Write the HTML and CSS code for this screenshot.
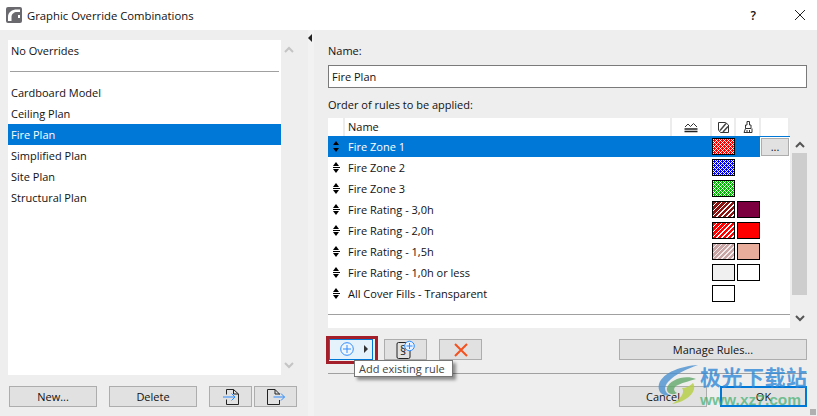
FILE: index.html
```html
<!DOCTYPE html>
<html lang="en">
<head>
<meta charset="utf-8">
<title>Graphic Override Combinations</title>
<link rel="stylesheet" href="styles.css">
</head>
<body>
<div class="dialog">
  <header class="titlebar">
    <svg class="app-logo" width="16" height="16" viewBox="0 0 16 16"><rect width="16" height="16" rx="2" fill="#6a6a6e"/><path d="M2 14V10C2 5 6 2.500 11 2.500H14V5H11C8 5 5.500 7 5.500 10V14Z" fill="#fff"/><rect x="12" y="8" width="2" height="3" fill="#fff"/></svg>
    <span class="title">Graphic Override Combinations</span>
    <span class="help">?</span>
    <svg class="close" width="12" height="12" viewBox="0 0 12 12"><path d="M1 1L11 11M11 1L1 11" stroke="#222" stroke-width="1" fill="none"/></svg>
  </header>
  <div class="content">
    <aside class="left">
      <div class="left-top">
        <div class="list">
          <div class="item">No Overrides</div>
          <div class="list-sep"></div>
          <div class="item">Cardboard Model</div>
          <div class="item">Ceiling Plan</div>
          <div class="item selected">Fire Plan</div>
          <div class="item">Simplified Plan</div>
          <div class="item">Site Plan</div>
          <div class="item">Structural Plan</div>
        </div>
        <div class="list-scroll">
          <svg width="10" height="7" viewBox="0 0 10 7"><path d="M1 6L5 2L9 6" stroke="#c4c4c4" stroke-width="2" fill="none"/></svg>
          <svg width="10" height="7" viewBox="0 0 10 7"><path d="M1 1L5 5L9 1" stroke="#c4c4c4" stroke-width="2" fill="none"/></svg>
        </div>
      </div>
      <div class="left-buttons">
        <button class="btn wide">New...</button>
        <button class="btn wide">Delete</button>
        <button class="btn icon-btn">
          <svg width="18" height="16" viewBox="0 0 18 16"><path d="M4.500 5.500V.5H11.500L16.500 5V15.500H4.500V10.500" stroke="#222" fill="none"/><path d="M11.500 .5V5H16.500" stroke="#222" fill="none"/><path d="M1 8H13M9.500 4.500L13 8L9.500 11.500" stroke="#2f8cff" fill="none"/></svg>
        </button>
        <button class="btn icon-btn">
          <svg width="18" height="16" viewBox="0 0 18 16"><path d="M12.500 5.500V5L8 .5H.5V15.500H12.500V11" stroke="#222" fill="none"/><path d="M8 .5V5H12.500" stroke="#222" fill="none"/><path d="M6.500 8H17.500M14 4.500L17.500 8L14 11.500" stroke="#2f8cff" fill="none"/></svg>
        </button>
      </div>
    </aside>
    <div class="splitter"><span class="split-arrow"></span></div>
    <main class="right">
      <label class="label name-label">Name:</label>
      <div class="name-input">Fire Plan</div>
      <label class="label order-label">Order of rules to be applied:</label>
      <div class="table-wrap">
        <div class="table">
          <div class="row head">
            <span class="c-grip"></span>
            <span class="c-name">Name</span>
            <span class="c-a"><svg width="14" height="11" viewBox="0 0 14 11"><path d="M1 5L4 2L6.500 4.500L9.500 1.500L13 5" stroke="#333" fill="none"/><path d="M.5 7H13.500M.5 9.500H13.500" stroke="#222" stroke-width="1.400"/></svg></span>
            <span class="c-b head-icon"><svg width="12" height="11" viewBox="0 0 12 11"><path d="M1.500 .5H8.500L11.500 3V10.500H3.500L1.500 8Z" stroke="#333" fill="none"/><path d="M3 8.500L9 1.500M6 10L11 4.500" stroke="#444" stroke-width="1.500"/></svg></span>
            <span class="c-c head-icon"><svg width="10" height="12" viewBox="0 0 10 12"><path d="M4 .5H6.500V4H8V7.500H2.500V4H4Z" stroke="#333" fill="#fff"/><path d="M2.500 7.500L1 11.500H9V7.500" stroke="#333" fill="none"/><path d="M4 9V11M6.500 9V11" stroke="#333"/></svg></span>
            <span class="c-d"></span>
          </div>
          <div class="row sel">
            <span class="c-grip"><i class="grip"></i></span><span class="c-name">Fire Zone 1</span><span class="c-a"></span>
            <span class="c-b"><i class="sw dots red"></i></span><span class="c-c"></span>
            <span class="c-d"><span class="more">...</span></span>
          </div>
          <div class="row">
            <span class="c-grip"><i class="grip"></i></span><span class="c-name">Fire Zone 2</span><span class="c-a"></span>
            <span class="c-b"><i class="sw dots blue"></i></span><span class="c-c"></span><span class="c-d"></span>
          </div>
          <div class="row">
            <span class="c-grip"><i class="grip"></i></span><span class="c-name">Fire Zone 3</span><span class="c-a"></span>
            <span class="c-b"><i class="sw dots green"></i></span><span class="c-c"></span><span class="c-d"></span>
          </div>
          <div class="row">
            <span class="c-grip"><i class="grip"></i></span><span class="c-name">Fire Rating - 3,0h</span><span class="c-a"></span>
            <span class="c-b"><i class="sw h-dark"></i></span><span class="c-c"><i class="sw s-maroon"></i></span><span class="c-d"></span>
          </div>
          <div class="row">
            <span class="c-grip"><i class="grip"></i></span><span class="c-name">Fire Rating - 2,0h</span><span class="c-a"></span>
            <span class="c-b"><i class="sw h-red"></i></span><span class="c-c"><i class="sw s-red"></i></span><span class="c-d"></span>
          </div>
          <div class="row">
            <span class="c-grip"><i class="grip"></i></span><span class="c-name">Fire Rating - 1,5h</span><span class="c-a"></span>
            <span class="c-b"><i class="sw h-pale"></i></span><span class="c-c"><i class="sw s-salmon"></i></span><span class="c-d"></span>
          </div>
          <div class="row">
            <span class="c-grip"><i class="grip"></i></span><span class="c-name">Fire Rating - 1,0h or less</span><span class="c-a"></span>
            <span class="c-b"><i class="sw s-grey"></i></span><span class="c-c"><i class="sw"></i></span><span class="c-d"></span>
          </div>
          <div class="row">
            <span class="c-grip"><i class="grip"></i></span><span class="c-name">All Cover Fills - Transparent</span><span class="c-a"></span>
            <span class="c-b"><i class="sw"></i></span><span class="c-c"></span><span class="c-d"></span>
          </div>
          <div class="table-end"></div>
        </div>
        <div class="table-scroll">
          <div class="arrow up"><svg width="10" height="7" viewBox="0 0 10 7"><path d="M1 6L5 2L9 6" stroke="#555" stroke-width="2" fill="none"/></svg></div>
          <div class="thumb"></div>
          <div class="arrow down"><svg width="10" height="7" viewBox="0 0 10 7"><path d="M1 1L5 5L9 1" stroke="#555" stroke-width="2" fill="none"/></svg></div>
        </div>
      </div>
      <div class="tools">
        <div class="add-outline">
          <button class="add-btn">
            <svg width="14" height="14" viewBox="0 0 14 14"><circle cx="7" cy="7" r="6.300" stroke="#2f8cff" fill="#fff" fill-opacity=".4"/><path d="M7 3V11M3 7H11" stroke="#2f8cff"/></svg>
            <span class="tri"></span>
          </button>
        </div>
        <button class="btn tool t-rule">
          <svg width="26" height="20" viewBox="0 0 26 20"><rect x="4" y="2.500" width="13" height="16" rx="1.500" stroke="#222" fill="none"/><text x="7" y="15" class="para">§</text><circle cx="16.500" cy="6" r="4.800" stroke="#2f8cff" fill="#e8f2ff"/><path d="M16.500 3V9M13.500 6H19.500" stroke="#2f8cff"/></svg>
        </button>
        <button class="btn tool t-del">
          <svg width="14" height="14" viewBox="0 0 14 14"><path d="M1 1L13 13M13 1L1 13" stroke="#f4511e" stroke-width="2" fill="none"/></svg>
        </button>
        <button class="btn manage">Manage Rules...</button>
      </div>
      <div class="rule"></div>
      <div class="footer">
        <button class="btn wide">Cancel</button>
        <button class="btn wide ok">OK</button>
      </div>
      <div class="tooltip">Add existing rule</div>
    </main>
  </div>
  <div class="watermark">
    <svg class="wm-logo" width="48" height="42" viewBox="0 0 48 42"><path d="M40 1C24 2 5 8 1 20C-1 28 5 33 12 31C7 29 5 24 10 18C17 10 29 5 40 1Z" fill="#4a90d0" fill-opacity=".8"/><path d="M38 15C27 10 11 16 9 24C8 29 14 32 19 29C15 27 15 23 20 21C26 18 32 17 38 15Z" fill="#62a86a" fill-opacity=".8"/><path d="M35 19C40 27 29 38 14 40C24 34 27 28 24 24C28 24 32 22 35 19Z" fill="#b6cf4a" fill-opacity=".85"/></svg>
    <div class="wm-text">
      <span class="wm-cn">极光下载站</span>
      <span class="wm-url">www.xz7.com</span>
    </div>
  </div>
  <div class="resize-grip"></div>
</div>
</body>
</html>
```
FILE: styles.css
```css
* { box-sizing: border-box; }
html, body { margin: 0; height: 100%; overflow: hidden; }
body { font-family: "Open Sans", "Noto Sans", sans-serif; font-size: 11px; color: #111; background: #eeeeee; }
.dialog { position: relative; width: 817px; height: 416px; display: flex; flex-direction: column; }
.titlebar { height: 30px; background: #fff; display: flex; align-items: center; padding-left: 6px; }
.title { margin-left: 5px; font-size: 11.300px; flex: 1; }
.help { font-size: 12px; font-weight: 600; margin-right: 38px; }
.close { margin-right: 11px; }
.content { flex: 1; display: flex; min-height: 0; }
.left { width: 308px; padding: 10px 0 0 8px; display: flex; flex-direction: column; flex: none; }
.left-top { display: flex; height: 335px; }
.list { width: 273px; background: #fff; }
.item { height: 21px; line-height: 21px; padding-left: 3px; }
.item.selected { background: #0078d7; color: #fff; }
.list-sep { height: 21px; padding-top: 10px; margin: 0 2px; }
.list-sep::before { content: ""; display: block; height: 1px; background: #a0a0a0; }
.list-scroll { width: 16px; display: flex; flex-direction: column; justify-content: space-between; align-items: center; padding: 6px 0 6px; }
.left-buttons { display: flex; margin: 11px 0 0 1px; }
.btn { font: inherit; color: #111; height: 21px; background: #e1e1e1; border: 1px solid #adadad; padding: 0; display: flex; align-items: center; justify-content: center; }
.wide { width: 88px; margin-right: 12px; }
.icon-btn { width: 43px; margin-right: 2px; }
.splitter { width: 6px; flex: none; background: #f2f2f2; padding-top: 4px; }
.split-arrow { display: block; width: 0; height: 0; border: 4px solid transparent; border-left: 0; border-right: 4px solid #222; }
.right { flex: 1; position: relative; padding: 14px 10px 0 14px; display: flex; flex-direction: column; min-width: 0; }
.label { display: block; height: 14px; line-height: 14px; }
.name-label { margin-bottom: 7px; }
.name-input { height: 23px; border: 1px solid #7a7a7a; background: #fff; line-height: 21px; padding-left: 3px; }
.order-label { margin-top: 10px; margin-bottom: 6px; }
.table-wrap { display: flex; height: 210px; gap: 1px; }
.table { width: 462px; background: #fff; flex: none; }
.row { display: flex; height: 21px; line-height: 21px; }
.row > span { display: flex; align-items: center; height: 100%; flex: none; }
.c-grip { width: 17px; justify-content: center; }
.c-name { width: 327px; padding-left: 3px; }
.c-a { width: 40px; justify-content: center; }
.c-b { width: 24px; justify-content: flex-start; }
.c-c { width: 25px; justify-content: flex-start; padding-left: 1px; }
.c-d { width: 29px; justify-content: flex-start; }
.head { height: 18px; line-height: 18px; }
.head > span { border-right: 2px solid #ececec; }
.head .head-icon { justify-content: center; padding-left: 0; }
.sel { background: #0078d7; color: #fff; }
.grip { display: block; width: 7px; height: 11px; background: linear-gradient(#000, #000) center / 7px 1px no-repeat; position: relative; }
.grip::before, .grip::after { content: ""; position: absolute; left: 0; width: 0; height: 0; border-left: 3.500px solid transparent; border-right: 3.500px solid transparent; }
.grip::before { top: 0; border-bottom: 4px solid #000; }
.grip::after { bottom: 0; border-top: 4px solid #000; }
.sel .grip { background-image: linear-gradient(#0078d7, #0078d7); }
.sw { display: block; width: 23px; height: 17px; border: 1px solid #000; background-color: #fff; flex: none; }
.dots { background-size: 4px 4px; background-position: 0 0, 2px 2px; }
.red { background-image: radial-gradient(circle at 1.500px 1.500px, #f00 1.100px, transparent 1.300px), radial-gradient(circle at 1.500px 1.500px, #f00 1.100px, transparent 1.300px); }
.blue { background-image: radial-gradient(circle at 1.500px 1.500px, #00f 1.100px, transparent 1.300px), radial-gradient(circle at 1.500px 1.500px, #00f 1.100px, transparent 1.300px); }
.green { background-image: radial-gradient(circle at 1.500px 1.500px, #0b0 1.100px, transparent 1.300px), radial-gradient(circle at 1.500px 1.500px, #0b0 1.100px, transparent 1.300px); }
.h-dark { background-image: repeating-linear-gradient(135deg, #8c1212 0 2.200px, #fff 2.200px 3.500px); }
.h-red { background-image: repeating-linear-gradient(135deg, #f00 0 2.200px, #fff 2.200px 3.500px); }
.h-pale { background-image: repeating-linear-gradient(135deg, #c9a5a5 0 2.200px, #f3eeee 2.200px 3.500px); }
.s-maroon { background-color: #7c0040; }
.s-red { background-color: #f00; }
.s-salmon { background-color: #e8ad9b; }
.s-grey { background-color: #f0f0f0; }
.more { width: 28px; height: 18px; background: #e1e1e1; border: 1px solid #adadad; outline: 1px solid #fff; color: #111; display: flex; align-items: center; justify-content: center; font-size: 11px; line-height: 14px; }
.table-end { height: 1px; background: #a0a0a0; margin-top: 10px; }
.table-scroll { width: 15px; margin-left: 1px; display: flex; flex-direction: column; flex: none; }
.arrow { height: 17px; display: flex; align-items: center; justify-content: center; }
.thumb { flex: 1; background: #cdcdcd; }
.arrow.up { margin-top: 18px; }
.arrow.down { height: 33px; padding-top: 14px; }
.tools { display: flex; margin-top: 11px; height: 21px; align-items: center; }
.add-outline { width: 52px; height: 28px; border: 3px solid #a31f2a; margin-left: -2px; flex: none; }
.add-btn { width: 44px; height: 21px; border: 1px solid #0078d7; background: #e5f1fb; padding: 0 4px 0 10px; display: flex; align-items: center; justify-content: space-between; }
.tri { width: 0; height: 0; border: 4px solid transparent; border-right: 0; border-left: 4px solid #333; }
.tool { width: 43px; flex: none; }
.t-rule { margin-left: 6px; }
.t-del { margin-left: 12px; }
.para { font-size: 12px; fill: #222; }
.manage { width: 188px; margin-left: auto; }
.rule { height: 1px; background: #a0a0a0; margin-top: 13px; }
.footer { display: flex; justify-content: flex-end; margin-top: 12px; }
.footer .wide { margin-right: 0; }
.footer .ok { margin-left: 13px; width: 87px; border: 2px solid #0078d7; }
.tooltip { position: absolute; left: 40px; top: 330px; width: 99px; height: 17px; background: #fff; border: 1px solid #767676; box-shadow: 3px 3px 3px rgba(0,0,0,.4); font-size: 11px; line-height: 15px; padding-left: 4px; color: #444; white-space: nowrap; }
.watermark { position: absolute; left: 658px; top: 364px; display: flex; pointer-events: none; }
.wm-text { display: flex; flex-direction: column; margin-left: -6px; }
.wm-cn { font-family: "Noto Sans CJK SC", sans-serif; font-weight: 700; font-size: 21px; line-height: 25px; color: rgba(45,135,215,.8); letter-spacing: 0.500px; }
.wm-url { font-family: "Liberation Sans", sans-serif; font-weight: 700; font-size: 15.500px; line-height: 20px; margin-top: 1px; color: rgba(60,175,110,.7); white-space: nowrap; }
.resize-grip { position: absolute; right: 1px; bottom: 1px; width: 6px; height: 6px; background-image: radial-gradient(circle at 1px 1px, #b0b0b0 1px, transparent 1px); background-size: 2px 2px; }
```
